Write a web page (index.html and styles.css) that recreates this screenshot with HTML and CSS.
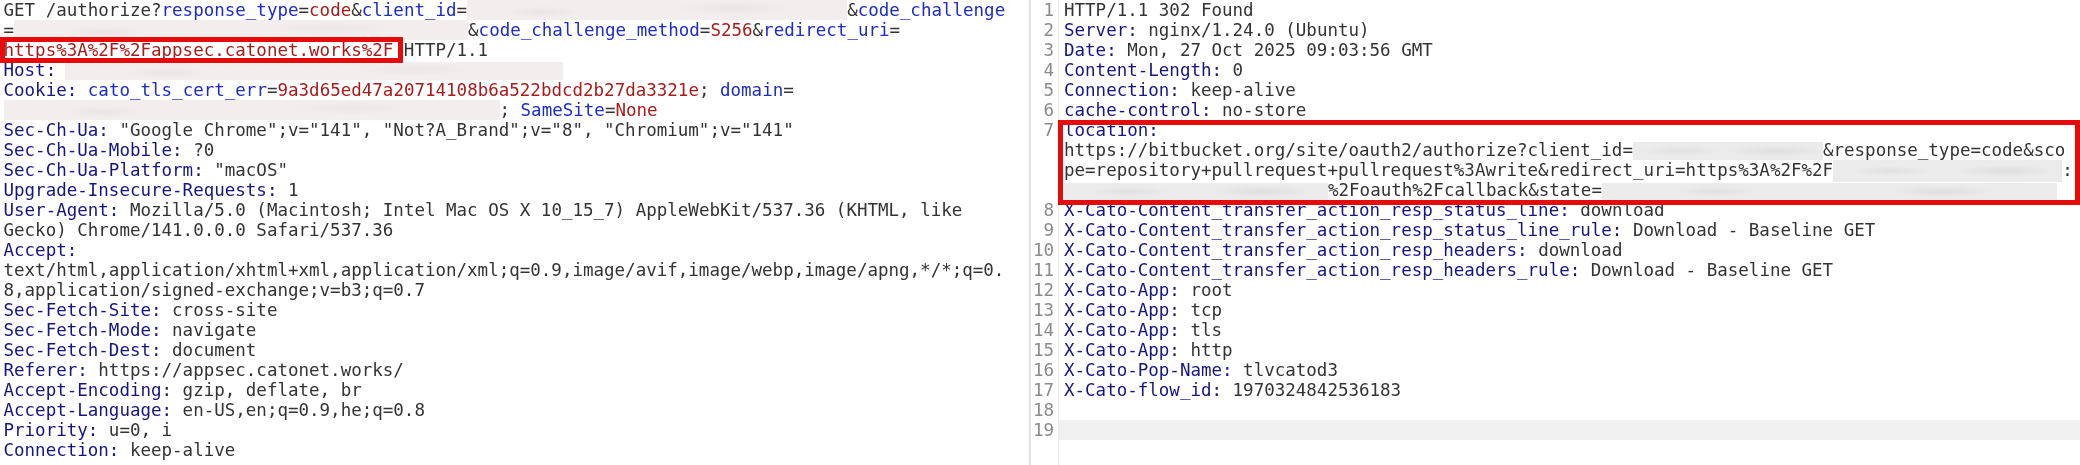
FILE: index.html
```html
<!DOCTYPE html>
<html lang="en">
<head>
<meta charset="utf-8">
<title>HTTP request and response</title>
<link rel="stylesheet" href="styles.css">
</head>
<body>
<main class="split">
  <section class="pane request">
    <div class="line">GET /authorize?<span class="p">response_type</span>=<span class="v">code</span>&amp;<span class="p">client_id</span>=<span class="r r-client"></span>&amp;<span class="p">code_challenge</span></div>
    <div class="line">=<span class="r r-challenge"></span>&amp;<span class="p">code_challenge_method</span>=<span class="v">S256</span>&amp;<span class="p">redirect_uri</span>=</div>
    <div class="line"><span class="v boxed-url">https%3A%2F%2Fappsec.catonet.works%2F</span> HTTP/1.1</div>
    <div class="line"><span class="k">Host:</span> <span class="r r-host"></span></div>
    <div class="line"><span class="k">Cookie:</span> <span class="p">cato_tls_cert_err</span>=<span class="v">9a3d65ed47a20714108b6a522bdcd2b27da3321e</span>; <span class="p">domain</span>=</div>
    <div class="line"><span class="r r-domain"></span>; <span class="p">SameSite</span>=<span class="v">None</span></div>
    <div class="line"><span class="k">Sec-Ch-Ua:</span> "Google Chrome";v="141", "Not?A_Brand";v="8", "Chromium";v="141"</div>
    <div class="line"><span class="k">Sec-Ch-Ua-Mobile:</span> ?0</div>
    <div class="line"><span class="k">Sec-Ch-Ua-Platform:</span> "macOS"</div>
    <div class="line"><span class="k">Upgrade-Insecure-Requests:</span> 1</div>
    <div class="line"><span class="k">User-Agent:</span> Mozilla/5.0 (Macintosh; Intel Mac OS X 10_15_7) AppleWebKit/537.36 (KHTML, like</div>
    <div class="line">Gecko) Chrome/141.0.0.0 Safari/537.36</div>
    <div class="line"><span class="k">Accept:</span></div>
    <div class="line">text/html,application/xhtml+xml,application/xml;q=0.9,image/avif,image/webp,image/apng,*/*;q=0.</div>
    <div class="line">8,application/signed-exchange;v=b3;q=0.7</div>
    <div class="line"><span class="k">Sec-Fetch-Site:</span> cross-site</div>
    <div class="line"><span class="k">Sec-Fetch-Mode:</span> navigate</div>
    <div class="line"><span class="k">Sec-Fetch-Dest:</span> document</div>
    <div class="line"><span class="k">Referer:</span> https://appsec.catonet.works/</div>
    <div class="line"><span class="k">Accept-Encoding:</span> gzip, deflate, br</div>
    <div class="line"><span class="k">Accept-Language:</span> en-US,en;q=0.9,he;q=0.8</div>
    <div class="line"><span class="k">Priority:</span> u=0, i</div>
    <div class="line"><span class="k">Connection:</span> keep-alive</div>
  </section>
  <section class="pane response">
    <div class="row"><span class="num">1</span><div class="code"><div class="line">HTTP/1.1 302 Found</div></div></div>
    <div class="row"><span class="num">2</span><div class="code"><div class="line"><span class="k">Server:</span> nginx/1.24.0 (Ubuntu)</div></div></div>
    <div class="row"><span class="num">3</span><div class="code"><div class="line"><span class="k">Date:</span> Mon, 27 Oct 2025 09:03:56 GMT</div></div></div>
    <div class="row"><span class="num">4</span><div class="code"><div class="line"><span class="k">Content-Length:</span> 0</div></div></div>
    <div class="row"><span class="num">5</span><div class="code"><div class="line"><span class="k">Connection:</span> keep-alive</div></div></div>
    <div class="row"><span class="num">6</span><div class="code"><div class="line"><span class="k">cache-control:</span> no-store</div></div></div>
    <div class="row"><span class="num">7</span><div class="code boxed-header">
      <div class="line"><span class="k">location:</span></div>
      <div class="line">https://bitbucket.org/site/oauth2/authorize?client_id=<span class="r g r-id"></span>&amp;response_type=code&amp;sco</div>
      <div class="line">pe=repository+pullrequest+pullrequest%3Awrite&amp;redirect_uri=https%3A%2F%2F<span class="r g r-uri"></span>:</div>
      <div class="line"><span class="r g r-path"></span>%2Foauth%2Fcallback&amp;state=<span class="r g r-state"></span></div>
    </div></div>
    <div class="row"><span class="num">8</span><div class="code"><div class="line"><span class="k">X-Cato-Content_transfer_action_resp_status_line:</span> download</div></div></div>
    <div class="row"><span class="num">9</span><div class="code"><div class="line"><span class="k">X-Cato-Content_transfer_action_resp_status_line_rule:</span> Download - Baseline GET</div></div></div>
    <div class="row"><span class="num">10</span><div class="code"><div class="line"><span class="k">X-Cato-Content_transfer_action_resp_headers:</span> download</div></div></div>
    <div class="row"><span class="num">11</span><div class="code"><div class="line"><span class="k">X-Cato-Content_transfer_action_resp_headers_rule:</span> Download - Baseline GET</div></div></div>
    <div class="row"><span class="num">12</span><div class="code"><div class="line"><span class="k">X-Cato-App:</span> root</div></div></div>
    <div class="row"><span class="num">13</span><div class="code"><div class="line"><span class="k">X-Cato-App:</span> tcp</div></div></div>
    <div class="row"><span class="num">14</span><div class="code"><div class="line"><span class="k">X-Cato-App:</span> tls</div></div></div>
    <div class="row"><span class="num">15</span><div class="code"><div class="line"><span class="k">X-Cato-App:</span> http</div></div></div>
    <div class="row"><span class="num">16</span><div class="code"><div class="line"><span class="k">X-Cato-Pop-Name:</span> tlvcatod3</div></div></div>
    <div class="row"><span class="num">17</span><div class="code"><div class="line"><span class="k">X-Cato-flow_id:</span> 1970324842536183</div></div></div>
    <div class="row"><span class="num">18</span><div class="code"><div class="line"></div></div></div>
    <div class="row"><span class="num">19</span><div class="code current"><div class="line"></div></div></div>
  </section>
</main>
</body>
</html>
```
FILE: styles.css
```css
* { box-sizing: border-box; }
html, body { margin: 0; background: #fff; }
body {
  width: 2080px;
  height: 465px;
  overflow: hidden;
  font-family: "DejaVu Sans Mono", "Liberation Mono", monospace;
  font-size: 17.5px;
  color: #333;
}
.split {
  display: grid;
  grid-template-columns: 1029px 1fr;
  height: 465px;
  filter: blur(0.35px);
}
.pane { height: 465px; overflow: hidden; }
.request { padding-left: 3.5px; }
.response {
  border-left: 2px solid #e4e4e4;
  background: linear-gradient(to right, #fff 27px, #ececec 27px, #ececec 28px, #fff 28px);
}
.line {
  height: 20px;
  line-height: 20px;
  white-space: pre;
}
.row { display: flex; }
.num {
  flex: none;
  width: 27px;
  height: 20px;
  padding-right: 4px;
  line-height: 20px;
  text-align: right;
  color: #8a8a8a;
}
.code {
  flex: 1;
  padding-left: 6px;
  min-width: 0;
}
.current {
  margin-left: 1px;
  background: #f0f0f0;
}
.k { color: #15157f; }
.p { color: #1c2cc4; }
.v { color: #a81b1b; }
.r {
  display: inline-block;
  height: 20px;
  vertical-align: top;
  background:
    radial-gradient(ellipse 40px 6px at 20% 60%, #ebe4e4, transparent),
    radial-gradient(ellipse 60px 7px at 70% 40%, #ece6e6, transparent),
    #f3eeee;
}
.r.g {
  background:
    radial-gradient(ellipse 40px 5px at 25% 50%, #e0e0e0, transparent),
    radial-gradient(ellipse 50px 6px at 75% 50%, #dedede, transparent),
    #ebebeb;
}
.r-client { width: 380px; }
.r-challenge { width: 454px; }
.r-host { width: 498px; margin-left: -2px; margin-top: 2px; height: 18px; }
.r-domain { width: 496px; }
.r-id { width: 190px; margin-top: 2px; height: 18px; }
.r-uri { width: 229px; height: 22px; }
.r-path { width: 264px; margin-top: 3px; height: 17px; }
.r-state { width: 455px; margin-top: 3px; height: 17px; }
.boxed-url { position: relative; }
.boxed-url::after {
  content: "";
  position: absolute;
  left: -4px;
  right: -10px;
  top: -3px;
  bottom: -3px;
  border: 5px solid #e60b0b;
}
.boxed-header { position: relative; }
.boxed-header::after {
  content: "";
  position: absolute;
  inset: 0 0 -5px 0;
  border: 5px solid #e60b0b;
}
```
